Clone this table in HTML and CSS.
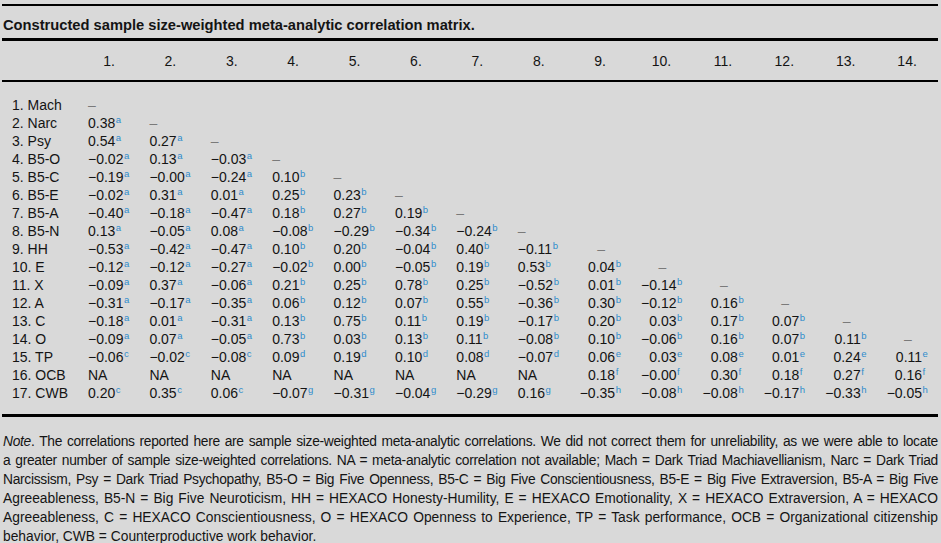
FILE: index.html
```html
<!DOCTYPE html>
<html lang="en">
<head>
<meta charset="utf-8">
<title>Correlation matrix</title>
<link rel="stylesheet" href="styles.css">
</head>
<body>
<div class="page">
  <div class="title">Constructed sample size-weighted meta-analytic correlation matrix.</div>
  <div class="head row">
    <span></span>
    <span class="h">1.</span><span class="h">2.</span><span class="h">3.</span><span class="h">4.</span><span class="h">5.</span><span class="h">6.</span><span class="h">7.</span><span class="h">8.</span><span class="h">9.</span><span class="h">10.</span><span class="h">11.</span><span class="h">12.</span><span class="h">13.</span><span class="h">14.</span>
  </div>
  <div class="body">
    <div class="row"><span class="lab">1. Mach</span><span class="l"><span class="d">–</span></span></div>
    <div class="row"><span class="lab">2. Narc</span><span class="l">0.38<sup>a</sup></span><span class="l"><span class="d">–</span></span></div>
    <div class="row"><span class="lab">3. Psy</span><span class="l">0.54<sup>a</sup></span><span class="l">0.27<sup>a</sup></span><span class="l"><span class="d">–</span></span></div>
    <div class="row"><span class="lab">4. B5-O</span><span class="l">−0.02<sup>a</sup></span><span class="l">0.13<sup>a</sup></span><span class="l">−0.03<sup>a</sup></span><span class="l"><span class="d">–</span></span></div>
    <div class="row"><span class="lab">5. B5-C</span><span class="l">−0.19<sup>a</sup></span><span class="l">−0.00<sup>a</sup></span><span class="l">−0.24<sup>a</sup></span><span class="l">0.10<sup>b</sup></span><span class="l"><span class="d">–</span></span></div>
    <div class="row"><span class="lab">6. B5-E</span><span class="l">−0.02<sup>a</sup></span><span class="l">0.31<sup>a</sup></span><span class="l">0.01<sup>a</sup></span><span class="l">0.25<sup>b</sup></span><span class="l">0.23<sup>b</sup></span><span class="l"><span class="d">–</span></span></div>
    <div class="row"><span class="lab">7. B5-A</span><span class="l">−0.40<sup>a</sup></span><span class="l">−0.18<sup>a</sup></span><span class="l">−0.47<sup>a</sup></span><span class="l">0.18<sup>b</sup></span><span class="l">0.27<sup>b</sup></span><span class="l">0.19<sup>b</sup></span><span class="l"><span class="d">–</span></span></div>
    <div class="row"><span class="lab">8. B5-N</span><span class="l">0.13<sup>a</sup></span><span class="l">−0.05<sup>a</sup></span><span class="l">0.08<sup>a</sup></span><span class="l">−0.08<sup>b</sup></span><span class="l">−0.29<sup>b</sup></span><span class="l">−0.34<sup>b</sup></span><span class="l">−0.24<sup>b</sup></span><span class="l"><span class="d">–</span></span></div>
    <div class="row"><span class="lab">9. HH</span><span class="l">−0.53<sup>a</sup></span><span class="l">−0.42<sup>a</sup></span><span class="l">−0.47<sup>a</sup></span><span class="l">0.10<sup>b</sup></span><span class="l">0.20<sup>b</sup></span><span class="l">−0.04<sup>b</sup></span><span class="l">0.40<sup>b</sup></span><span class="l">−0.11<sup>b</sup></span><span class="r"><span class="d dr">–</span></span></div>
    <div class="row"><span class="lab">10. E</span><span class="l">−0.12<sup>a</sup></span><span class="l">−0.12<sup>a</sup></span><span class="l">−0.27<sup>a</sup></span><span class="l">−0.02<sup>b</sup></span><span class="l">0.00<sup>b</sup></span><span class="l">−0.05<sup>b</sup></span><span class="l">0.19<sup>b</sup></span><span class="l">0.53<sup>b</sup></span><span class="r"><span class="n">0.04</span><sup>b</sup></span><span class="r"><span class="d dr">–</span></span></div>
    <div class="row"><span class="lab">11. X</span><span class="l">−0.09<sup>a</sup></span><span class="l">0.37<sup>a</sup></span><span class="l">−0.06<sup>a</sup></span><span class="l">0.21<sup>b</sup></span><span class="l">0.25<sup>b</sup></span><span class="l">0.78<sup>b</sup></span><span class="l">0.25<sup>b</sup></span><span class="l">−0.52<sup>b</sup></span><span class="r"><span class="n">0.01</span><sup>b</sup></span><span class="r"><span class="n">−0.14</span><sup>b</sup></span><span class="r"><span class="d dr">–</span></span></div>
    <div class="row"><span class="lab">12. A</span><span class="l">−0.31<sup>a</sup></span><span class="l">−0.17<sup>a</sup></span><span class="l">−0.35<sup>a</sup></span><span class="l">0.06<sup>b</sup></span><span class="l">0.12<sup>b</sup></span><span class="l">0.07<sup>b</sup></span><span class="l">0.55<sup>b</sup></span><span class="l">−0.36<sup>b</sup></span><span class="r"><span class="n">0.30</span><sup>b</sup></span><span class="r"><span class="n">−0.12</span><sup>b</sup></span><span class="r"><span class="n">0.16</span><sup>b</sup></span><span class="r"><span class="d dr">–</span></span></div>
    <div class="row"><span class="lab">13. C</span><span class="l">−0.18<sup>a</sup></span><span class="l">0.01<sup>a</sup></span><span class="l">−0.31<sup>a</sup></span><span class="l">0.13<sup>b</sup></span><span class="l">0.75<sup>b</sup></span><span class="l">0.11<sup>b</sup></span><span class="l">0.19<sup>b</sup></span><span class="l">−0.17<sup>b</sup></span><span class="r"><span class="n">0.20</span><sup>b</sup></span><span class="r"><span class="n">0.03</span><sup>b</sup></span><span class="r"><span class="n">0.17</span><sup>b</sup></span><span class="r"><span class="n">0.07</span><sup>b</sup></span><span class="r"><span class="d dr">–</span></span></div>
    <div class="row"><span class="lab">14. O</span><span class="l">−0.09<sup>a</sup></span><span class="l">0.07<sup>a</sup></span><span class="l">−0.05<sup>a</sup></span><span class="l">0.73<sup>b</sup></span><span class="l">0.03<sup>b</sup></span><span class="l">0.13<sup>b</sup></span><span class="l">0.11<sup>b</sup></span><span class="l">−0.08<sup>b</sup></span><span class="r"><span class="n">0.10</span><sup>b</sup></span><span class="r"><span class="n">−0.06</span><sup>b</sup></span><span class="r"><span class="n">0.16</span><sup>b</sup></span><span class="r"><span class="n">0.07</span><sup>b</sup></span><span class="r"><span class="n">0.11</span><sup>b</sup></span><span class="r"><span class="d dr">–</span></span></div>
    <div class="row"><span class="lab">15. TP</span><span class="l">−0.06<sup>c</sup></span><span class="l">−0.02<sup>c</sup></span><span class="l">−0.08<sup>c</sup></span><span class="l">0.09<sup>d</sup></span><span class="l">0.19<sup>d</sup></span><span class="l">0.10<sup>d</sup></span><span class="l">0.08<sup>d</sup></span><span class="l">−0.07<sup>d</sup></span><span class="r"><span class="n">0.06</span><sup>e</sup></span><span class="r"><span class="n">0.03</span><sup>e</sup></span><span class="r"><span class="n">0.08</span><sup>e</sup></span><span class="r"><span class="n">0.01</span><sup>e</sup></span><span class="r"><span class="n">0.24</span><sup>e</sup></span><span class="r"><span class="n">0.11</span><sup>e</sup></span></div>
    <div class="row"><span class="lab">16. OCB</span><span class="l">NA</span><span class="l">NA</span><span class="l">NA</span><span class="l">NA</span><span class="l">NA</span><span class="l">NA</span><span class="l">NA</span><span class="l">NA</span><span class="r"><span class="n">0.18</span><sup>f</sup></span><span class="r"><span class="n">−0.00</span><sup>f</sup></span><span class="r"><span class="n">0.30</span><sup>f</sup></span><span class="r"><span class="n">0.18</span><sup>f</sup></span><span class="r"><span class="n">0.27</span><sup>f</sup></span><span class="r"><span class="n">0.16</span><sup>f</sup></span></div>
    <div class="row"><span class="lab">17. CWB</span><span class="l">0.20<sup>c</sup></span><span class="l">0.35<sup>c</sup></span><span class="l">0.06<sup>c</sup></span><span class="l">−0.07<sup>g</sup></span><span class="l">−0.31<sup>g</sup></span><span class="l">−0.04<sup>g</sup></span><span class="l">−0.29<sup>g</sup></span><span class="l">0.16<sup>g</sup></span><span class="r"><span class="n">−0.35</span><sup>h</sup></span><span class="r"><span class="n">−0.08</span><sup>h</sup></span><span class="r"><span class="n">−0.08</span><sup>h</sup></span><span class="r"><span class="n">−0.17</span><sup>h</sup></span><span class="r"><span class="n">−0.33</span><sup>h</sup></span><span class="r"><span class="n">−0.05</span><sup>h</sup></span></div>
  </div>
  <div class="note">
    <div class="ln tight"><i>Note</i>. The correlations reported here are sample size-weighted meta-analytic correlations. We did not correct them for unreliability, as we were able to locate</div>
    <div class="ln tight">a greater number of sample size-weighted correlations. NA = meta-analytic correlation not available; Mach = Dark Triad Machiavellianism, Narc = Dark Triad</div>
    <div class="ln tight">Narcissism, Psy = Dark Triad Psychopathy, B5-O = Big Five Openness, B5-C = Big Five Conscientiousness, B5-E = Big Five Extraversion, B5-A = Big Five</div>
    <div class="ln">Agreeableness, B5-N = Big Five Neuroticism, HH = HEXACO Honesty-Humility, E = HEXACO Emotionality, X = HEXACO Extraversion, A = HEXACO</div>
    <div class="ln">Agreeableness, C = HEXACO Conscientiousness, O = HEXACO Openness to Experience, TP = Task performance, OCB = Organizational citizenship</div>
    <div class="ln last">behavior, CWB = Counterproductive work behavior.</div>
  </div>
</div>
</body>
</html>
```
FILE: styles.css
```css
html, body {
  margin: 0;
  padding: 0;
  background: #d9d9d9;
}
body {
  font-family: "Liberation Sans", Arial, Helvetica, sans-serif;
  color: #141414;
  width: 941px;
  height: 543px;
  overflow: hidden;
}
.page {
  margin: 0 3px 0 2px;
  padding-top: 4px;
}
.title {
  border-top: 2px solid #000;
  padding: 9.5px 0 4.5px 1px;
  font-size: 14.7px;
  line-height: 18px;
  font-weight: bold;
}
.row {
  display: grid;
  grid-template-columns: 86px repeat(13, 61.4px) 1fr;
  height: 18.06px;
  font-size: 14px;
  line-height: 18px;
  white-space: nowrap;
}
.head {
  border-top: 3px solid #000;
  border-bottom: 2px solid #000;
  padding: 10.5px 0;
  height: 18px;
}
.h {
  width: 42px;
  text-align: center;
}
.body {
  padding: 13.5px 0 12px;
  border-bottom: 3px solid #000;
}
.lab {
  padding-left: 10px;
}
.l, .r {
  display: block;
}
.n {
  display: inline-block;
  width: 36px;
  text-align: right;
}
.d {
  color: #7a7a7a;
}
.dr {
  display: inline-block;
  margin-left: 18px;
}
sup {
  font-size: 9.5px;
  line-height: 0;
  vertical-align: 5px;
  color: #2f8ccc;
  margin-left: 0.5px;
}
.note {
  padding: 14.3px 0 0 1px;
  font-size: 13.8px;
  line-height: 19px;
}
.ln {
  white-space: nowrap;
  text-align: justify;
  text-align-last: justify;
}
.ln.last {
  text-align-last: left;
}
.tight {
  letter-spacing: -0.3px;
}
```
